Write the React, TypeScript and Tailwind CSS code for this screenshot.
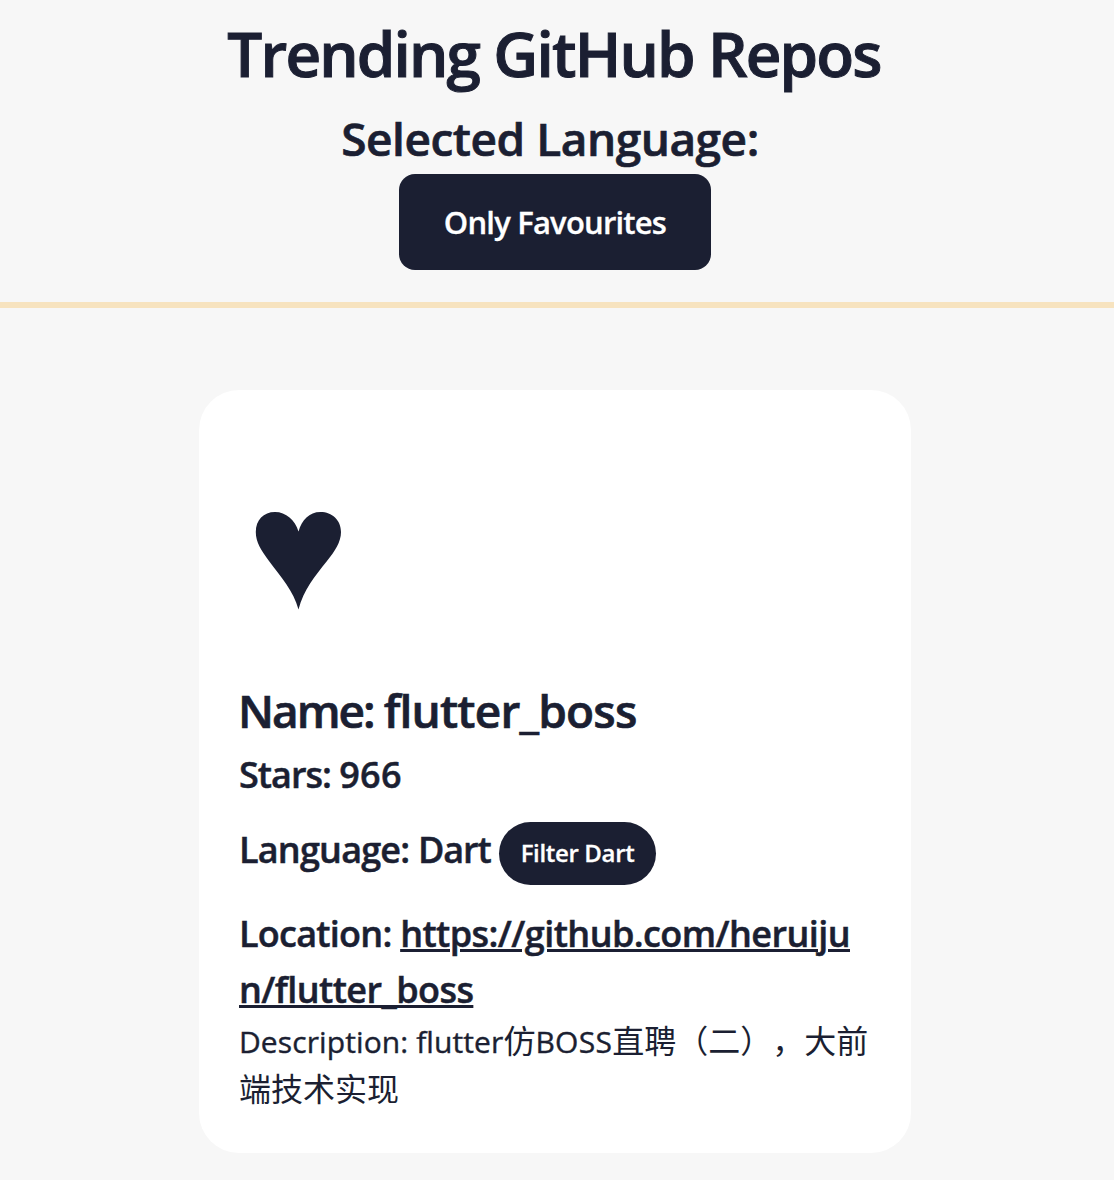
const repo = {
  name: 'flutter_boss',
  stars: 966,
  language: 'Dart',
  url: 'https://github.com/heruijun/flutter_boss',
};

function Heart() {
  return (
    <svg viewBox="0 0 86 98" className="block h-[98px] w-[86px] fill-current" aria-hidden="true">
      <path d="M43.500 97.500C38.500 79 26 65 14 49C6 38 .8 30 .8 20C.8 8 8.500 0 20 0C31 0 40 8 43.500 19.500C47 8 54 0 65.500 0C77 0 86 8 86 20C86 30 80 39 72 49C60 64 48.500 78 43.500 97.500Z" />
    </svg>
  );
}

function Header() {
  return (
    <header className="flex flex-col items-center border-b-6 border-[#f7e3bf] pt-[5px] pr-1 pb-8">
      <h1 className="pr-0.5 text-[62px] leading-24 font-semibold tracking-[-1.84px] whitespace-nowrap [-webkit-text-stroke:1px]">
        Trending GitHub Repos
      </h1>
      <h2 className="pt-px pr-2.5 text-[46px] leading-[72px] font-semibold tracking-[-0.48px] whitespace-nowrap [-webkit-text-stroke:0.7px]">
        Selected Language:
      </h2>
      <button className="h-24 w-[312px] rounded-2xl bg-[#1b1f32] text-[31px] font-semibold tracking-[-0.8px] text-white [-webkit-text-stroke:0.3px]">
        Only Favourites
      </button>
    </header>
  );
}

function RepoCard() {
  return (
    <article className="h-[763px] w-[712px] rounded-[40px] bg-white px-10 pt-[122px]">
      <div className="h-[162px] pl-4">
        <Heart />
      </div>
      <h2 className="-ml-px text-[46px] leading-[73px] font-semibold tracking-[-0.8px] whitespace-nowrap [-webkit-text-stroke:0.7px]">
        <span className="tracking-[-2px]">Name: </span>
        {repo.name}
      </h2>
      <h3 className="text-4xl leading-14 font-semibold tracking-[0.3px] [-webkit-text-stroke:0.5px]">
        <span className="tracking-[-1px]">Stars: </span>
        {repo.stars}
      </h3>
      <div className="flex h-[103px] items-center pb-2.5">
        <h3 className="w-[260px] text-4xl leading-14 font-semibold tracking-[-1.1px] whitespace-nowrap [-webkit-text-stroke:0.5px]">
          <span className="tracking-[-0.8px]">Language: </span>
          {repo.language}
        </h3>
        <button className="mt-[7px] h-[63px] w-[157px] rounded-full bg-[#1b1f32] text-2xl font-semibold tracking-[-0.35px] text-white [-webkit-text-stroke:0.3px]">
          Filter {repo.language}
        </button>
      </div>
      <h3 className="text-4xl leading-14 font-semibold tracking-[-0.57px] [-webkit-text-stroke:0.5px]">
        <span className="tracking-[-0.75px]">Location: </span>
        <a href={repo.url} className="break-all underline decoration-[3px] underline-offset-[2px]">
          {repo.url}
        </a>
      </h3>
      <p className="-mt-[3px] text-[32px] leading-12 font-['Noto_Sans_CJK_SC',sans-serif] [text-spacing-trim:space-all]">
        <span className="font-['Open_Sans'] text-[30px] leading-none tracking-[0.1px] [-webkit-text-stroke:0.4px]">
          Description: flutter
        </span>
        仿
        <span className="font-['Open_Sans'] text-[30px] leading-none tracking-[0.3px] [-webkit-text-stroke:0.4px]">
          BOSS
        </span>
        直聘（二），大前端技术实现
      </p>
    </article>
  );
}

export default function App() {
  return (
    <main className="min-h-[1180px] bg-[#f7f7f7] font-['Open_Sans','Noto_Sans_CJK_SC',sans-serif] text-[#1b1f32]">
      <Header />
      <section className="flex justify-center pt-[82px] pr-1">
        <RepoCard />
      </section>
    </main>
  );
}
